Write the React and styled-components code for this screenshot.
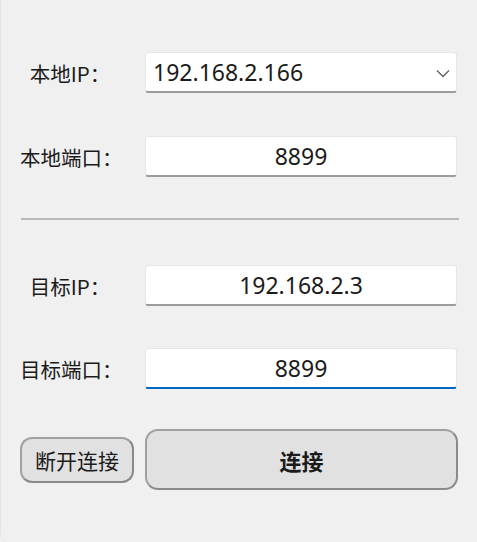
import React from 'react';
import styled, { createGlobalStyle } from 'styled-components';

const GlobalStyle = createGlobalStyle`
  html, body {
    margin: 0;
    padding: 0;
    background: #f0f0f0;
  }
  body {
    font-family: "Noto Sans", "Noto Sans CJK SC", sans-serif;
    color: #1b1b1b;
  }
`;

const Window = styled.div`
  width: 477px;
  height: 542px;
  box-sizing: border-box;
  background: #f0f0f0;
  border-left: 1px solid #e4e4e4;
  border-radius: 0 0 9px 9px;
  padding: 52px 19px 0 19px;
  display: flex;
  flex-direction: column;
`;

const Row = styled.div`
  display: grid;
  grid-template-columns: 100px 312px;
  column-gap: 25px;
  align-items: center;
  height: 41px;
  margin-bottom: ${p => p.$after || 0}px;
`;

const Label = styled.div`
  font-family: "Noto Sans CJK SC", sans-serif;
  font-size: 20.5px;
  text-align: center;
  white-space: nowrap;
  color: #1b1b1b;
`;

const Field = styled.div`
  position: relative;
  height: 41px;
  box-sizing: border-box;
  background: #ffffff;
  border: 1px solid #e6e6e6;
  border-bottom: 2px solid ${p => (p.$focused ? '#0067c0' : '#9c9c9c')};
  border-radius: 3px;
  display: flex;
  align-items: center;
  justify-content: ${p => (p.$left ? 'flex-start' : 'center')};
  padding: 0 7px;
  font-family: "Noto Sans", sans-serif;
  font-size: 23px;
  color: #1b1b1b;
`;

const Chevron = styled.svg`
  position: absolute;
  right: 6px;
  top: 16px;
`;

const Separator = styled.div`
  height: 2px;
  background: #b9b9b9;
  margin: 0 0 45px 1px;
  width: 438px;
`;

const ButtonRow = styled.div`
  display: grid;
  grid-template-columns: 114px 313px;
  column-gap: 11px;
  align-items: center;
  height: 61px;
`;

const Button = styled.button`
  box-sizing: border-box;
  height: ${p => (p.$primary ? 61 : 46)}px;
  background: #e1e1e1;
  border: 2px solid #a0a0a0;
  border-bottom-color: #8a8a8a;
  border-right-color: #8a8a8a;
  border-radius: ${p => (p.$primary ? 13 : 12)}px;
  font-family: "Noto Sans CJK SC", sans-serif;
  font-size: ${p => (p.$primary ? 22 : 21)}px;
  font-weight: ${p => (p.$primary ? 700 : 400)};
  color: #1b1b1b;
  padding: 0;
  white-space: nowrap;
  cursor: pointer;
`;

export default function App() {
  return (
    <>
      <GlobalStyle />
      <Window>
        <Row $after={43}>
          <Label>本地IP：</Label>
          <Field $left>
            192.168.2.166
            <Chevron width="14" height="9" viewBox="0 0 14 9">
              <path d="M1 1.5 L7 7.5 L13 1.5" fill="none" stroke="#5f5f5f" strokeWidth="1.3" />
            </Chevron>
          </Field>
        </Row>
        <Row $after={41}>
          <Label>本地端口：</Label>
          <Field>8899</Field>
        </Row>
        <Separator />
        <Row $after={42}>
          <Label>目标IP：</Label>
          <Field>192.168.2.3</Field>
        </Row>
        <Row $after={40}>
          <Label>目标端口：</Label>
          <Field $focused>8899</Field>
        </Row>
        <ButtonRow>
          <Button>断开连接</Button>
          <Button $primary>连接</Button>
        </ButtonRow>
      </Window>
    </>
  );
}
